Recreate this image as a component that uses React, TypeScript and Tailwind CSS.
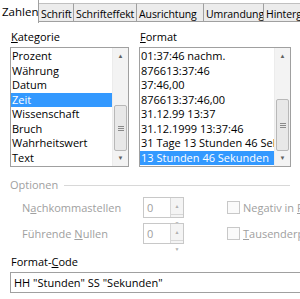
import React from "react";

const tabs = [
  { t: "Zahlen", w: "w-[39px]" },
  { t: "Schrift", w: "w-[35px]" },
  { t: "Schrifteffekt", w: "w-[63px]" },
  { t: "Ausrichtung", w: "w-[67px]" },
  { t: "Umrandung", w: "w-[60px]" },
  { t: "Hintergrund", w: "w-[60px]" },
];
const kategorien = ["Prozent", "Währung", "Datum", "Zeit", "Wissenschaft", "Bruch", "Wahrheitswert", "Text"];
const formate = [
  "01:37:46 nachm.",
  "876613:37:46",
  "37:46,00",
  "876613:37:46,00",
  "31.12.99 13:37",
  "31.12.1999 13:37:46",
  "31 Tage 13 Stunden 46 Sekunden",
  "13 Stunden 46 Sekunden",
];

function Scrollbar({ thumbTop, thumbH }: { thumbTop: number; thumbH: number }) {
  return (
    <div className="relative w-[16px] shrink-0 bg-[#f3f3f3] border-l border-[#ececec]">
      <div className="h-[16px] flex items-center justify-center text-[6px] text-[#606060]">▲</div>
      <div
        className="absolute left-[1px] right-[1px] rounded-[2px] border border-[#b8b8b8] bg-[#e8e8e8] flex flex-col items-center justify-center gap-[1px]"
        style={{ top: thumbTop, height: thumbH }}
      >
        <div className="w-[6px] h-px bg-[#8a8a8a]" />
        <div className="w-[6px] h-px bg-[#8a8a8a]" />
        <div className="w-[6px] h-px bg-[#8a8a8a]" />
      </div>
      <div className="absolute bottom-0 left-0 right-0 h-[16px] flex items-center justify-center text-[6px] text-[#606060]">▼</div>
    </div>
  );
}

function ListBox({ items, selected, thumbTop, thumbH }: { items: string[]; selected: number; thumbTop: number; thumbH: number }) {
  return (
    <div className="flex h-[120px] border border-[#a0a0a0] bg-white overflow-hidden">
      <div className="flex-1 flex flex-col pt-px overflow-hidden">
        {items.map((it, i) => (
          <div
            key={it}
            className={`h-[14.5px] leading-[14.5px] pl-px whitespace-nowrap ${i === selected ? "bg-[#3399ff] text-white" : "text-black"}`}
          >
            {it}
          </div>
        ))}
      </div>
      <Scrollbar thumbTop={thumbTop} thumbH={thumbH} />
    </div>
  );
}

function Spin() {
  return (
    <div className="flex shrink-0 w-[41px] h-[21px] border border-[#c8c8c8] bg-white">
      <div className="flex-1 pl-[3px] leading-[19px] text-[#a0a0a0]">0</div>
      <div className="w-[13px] flex flex-col border-l border-[#d8d8d8] bg-[#f4f4f4]">
        <div className="flex-1 flex items-center justify-center text-[5px] text-[#b0b0b0] border-b border-[#d8d8d8]">▲</div>
        <div className="flex-1 flex items-center justify-center text-[5px] text-[#b0b0b0]">▼</div>
      </div>
    </div>
  );
}

function Check({ children }: { children: React.ReactNode }) {
  return (
    <div className="ml-[43px] flex items-center gap-[3px] whitespace-nowrap">
      <div className="shrink-0 w-[13px] h-[13px] border border-[#c8c8c8] bg-[#fafafa]" />
      <span>{children}</span>
    </div>
  );
}

export default function App() {
  return (
    <div className="w-[300px] h-[299px] bg-white overflow-hidden text-[11px] leading-[16px] text-black" style={{ fontFamily: "'Open Sans', 'Noto Sans', sans-serif" }}>
      <div className="flex h-[22px] border-b border-[#a0a0a0] bg-white">
        {tabs.map((tab, i) => (
          <div
            key={tab.t}
            className={`shrink-0 ${tab.w} pl-[2px] whitespace-nowrap overflow-hidden border-r border-[#a0a0a0] ${
              i === 0
                ? "bg-white h-[23px] pt-[4px] -mb-px text-[11.5px]"
                : "bg-[#ececec] mt-[3px] pt-[2px] border-t border-t-[#c0c0c0] text-[10.5px] tracking-[-0.1px]"
            }`}
          >
            {tab.t}
          </div>
        ))}
      </div>

      <div className="flex gap-[10px] px-[10px] pt-[7px]">
        <div className="flex flex-col w-[119px] shrink-0">
          <div className="h-[18px] pl-px">
            <span className="underline">K</span>ategorie
          </div>
          <ListBox items={kategorien} selected={3} thumbTop={57} thumbH={46} />
        </div>
        <div className="flex flex-col w-[152px] shrink-0">
          <div className="h-[18px] pl-px">
            <span className="underline">F</span>ormat
          </div>
          <ListBox items={formate} selected={7} thumbTop={51} thumbH={52} />
        </div>
      </div>

      <div className="flex items-center gap-[6px] px-[10px] mt-[10px] text-[#a0a0a0]">
        <span>Optionen</span>
        <div className="flex-1 h-px bg-[#d8d8d8]" />
      </div>

      <div className="flex flex-col gap-[5px] pl-[22px] mt-[4px] text-[#a0a0a0] whitespace-nowrap">
        <div className="flex items-center">
          <span className="w-[121px] shrink-0">
            N<span className="underline">a</span>chkommastellen
          </span>
          <Spin />
          <Check>
            Negativ in <span className="underline">R</span>ot
          </Check>
        </div>
        <div className="flex items-center">
          <span className="w-[121px] shrink-0">
            Führende <span className="underline">N</span>ullen
          </span>
          <Spin />
          <Check>
            <span className="underline">T</span>ausenderpunkt
          </Check>
        </div>
      </div>

      <div className="px-[10px] mt-[10px]">
        <div className="h-[18px] pl-px">
          Format-<span className="underline">C</span>ode
        </div>
        <div className="h-[21px] border border-[#a0a0a0] -mr-[20px] pl-[3px] leading-[19px] whitespace-nowrap">
          HH "Stunden" SS "Sekunden"
        </div>
      </div>
    </div>
  );
}
